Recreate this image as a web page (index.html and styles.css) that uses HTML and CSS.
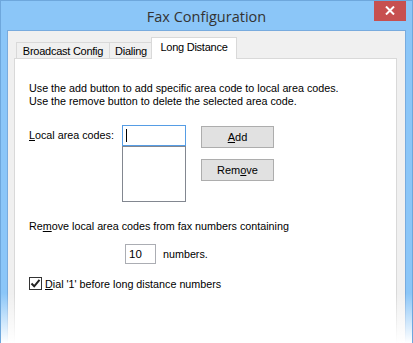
FILE: index.html
```html
<!DOCTYPE html>
<html lang="en">
<head>
  <meta charset="UTF-8">
  <title>Fax Configuration</title>
  <link rel="stylesheet" href="styles.css">
</head>
<body>

  <div class="window">
    <div class="titlebar">
      <span class="title">Fax Configuration</span>
      <button class="close-btn" aria-label="Close">
        <svg width="10" height="9" viewBox="0 0 10 9"><path d="M1 0.5 L9 8.5 M9 0.5 L1 8.5" stroke="#fff" stroke-width="2"/></svg>
      </button>
    </div>

    <div class="client">
      <div class="tabs">
        <div class="tab tab-broadcast">Broadcast Config</div>
        <div class="tab tab-dialing">Dialing</div>
        <div class="tab tab-long active">Long Distance</div>
      </div>

      <div class="panel">
        <p class="desc">
          Use the add button to add specific area code to local area codes.<br>
          Use the remove button to delete the selected area code.
        </p>

        <div class="codes-row">
          <label class="codes-label"><u>L</u>ocal area codes:</label>
          <div class="codes-box">
            <div class="code-input"><span class="caret"></span></div>
            <div class="code-list"></div>
          </div>
          <div class="code-buttons">
            <button class="btn"><u>A</u>dd</button>
            <button class="btn">Rem<u>o</u>ve</button>
          </div>
        </div>

        <p class="strip-text">Re<u>m</u>ove local area codes from fax numbers containing</p>

        <div class="digits-row">
          <div class="digits-input">10</div>
          <span>numbers.</span>
        </div>

        <label class="dial-row">
          <span class="checkbox">
            <svg width="11" height="11" viewBox="0 0 11 11"><path d="M1.5 5.5 L4.2 8.3 L9.5 1.8" fill="none" stroke="#222" stroke-width="2"/></svg>
          </span>
          <span><u>D</u>ial '1' before long distance numbers</span>
        </label>
      </div>
    </div>

    <div class="fade"></div>
  </div>

</body>
</html>
```

FILE: styles.css
```css
body {
  margin: 0;
  font-family: "Liberation Sans", Arial, sans-serif;
  font-size: 10.75px;
  color: #000;
}
.window {
  position: relative;
  width: 413px;
  height: 343px;
  box-sizing: border-box;
  background: #8bc6f8;
  border: 1px solid #6ea7dc;
  border-bottom: none;
  padding: 0 6px;
  overflow: hidden;
}
.titlebar {
  height: 29px;
  display: flex;
  align-items: center;
  justify-content: center;
}
.title {
  font-family: "Open Sans", sans-serif;
  font-size: 14.5px;
  color: #333;
  margin-top: 1px;
}
.close-btn {
  position: absolute;
  top: -1px;
  right: 6px;
  width: 32px;
  height: 21px;
  border: none;
  padding: 0;
  background: #c75050;
  display: flex;
  align-items: center;
  justify-content: center;
}
.client {
  height: 320px;
  background: #f0f0f0;
  border: 1px solid #78abde;
  border-bottom: none;
  padding: 6px 8px 0 6px;
}
.tabs {
  display: flex;
  align-items: flex-end;
  padding-left: 2px;
  height: 21px;
  position: relative;
  z-index: 1;
}
.tab {
  box-sizing: border-box;
  height: 16px;
  line-height: 17px;
  text-align: center;
  background: #f0f0f0;
  border: 1px solid #d9d9d9;
  border-bottom: none;
  margin-right: -1px;
  font-size: 11px;
  letter-spacing: -0.25px;
}
.tab-broadcast {
  width: 94px;
}
.tab-dialing {
  width: 44px;
}
.tab.active {
  width: 86px;
  height: 22px;
  line-height: 19px;
  background: #fff;
  margin-left: -1px;
  margin-bottom: -1px;
  position: relative;
}
.panel {
  background: #fff;
  border: 1px solid #d9d9d9;
  height: 300px;
  padding: 23px 14px 0 14px;
}
.desc {
  margin: 0;
  line-height: 13px;
}
.codes-row {
  display: flex;
  margin-top: 17px;
}
.codes-label {
  width: 93px;
  line-height: 21px;
}
.codes-box {
  width: 64px;
}
.code-input {
  height: 19px;
  border: 1px solid #569de5;
  display: flex;
  align-items: center;
  padding-left: 3px;
}
.caret {
  width: 1px;
  height: 13px;
  background: #000;
}
.code-list {
  height: 54px;
  border: 1px solid #828790;
}
.code-buttons {
  display: flex;
  flex-direction: column;
  gap: 11px;
  margin-left: 15px;
  padding-top: 1px;
}
.btn {
  width: 73px;
  height: 22px;
  padding: 0;
  background: #e1e1e1;
  border: 1px solid #adadad;
  font-family: inherit;
  font-size: 11px;
  color: #000;
}
.strip-text {
  margin: 18px 0 0 0;
  line-height: 13px;
}
.digits-row {
  display: flex;
  align-items: center;
  gap: 7px;
  margin: 11px 0 0 96px;
}
.digits-input {
  width: 26px;
  height: 18px;
  line-height: 18px;
  border: 1px solid #abadb3;
  padding-left: 3px;
  font-size: 11.5px;
}
.dial-row {
  display: flex;
  align-items: center;
  gap: 3px;
  margin-top: 13px;
}
.checkbox {
  width: 11px;
  height: 11px;
  border: 1px solid #333;
  background: #fff;
  display: flex;
}
.fade {
  position: absolute;
  left: 0;
  right: 0;
  bottom: 0;
  height: 50px;
  background: linear-gradient(rgba(255, 255, 255, 0), #fff);
}
```
